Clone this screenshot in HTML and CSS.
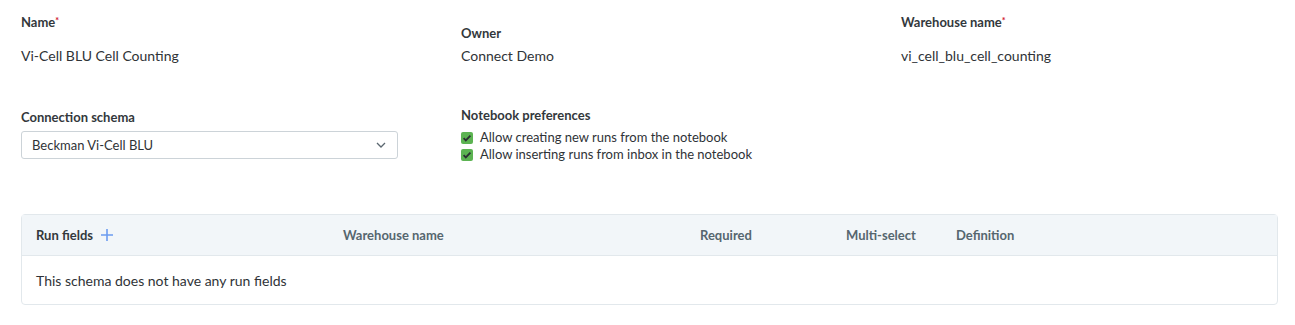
FILE: index.html
```html
<!DOCTYPE html>
<html lang="en">
<head>
    <meta charset="UTF-8">
    <title>Schema details</title>
    <link rel="stylesheet" href="styles.css">
</head>
<body>
    <!--1. 기본 정보-->
    <section class="fields">
        <div class="field">
            <label class="flabel">Name<span class="req">*</span></label>
            <div class="fvalue edit">Vi-Cell BLU Cell Counting</div>
        </div>
        <div class="field">
            <label class="flabel">Owner</label>
            <div class="fvalue">Connect Demo</div>
        </div>
        <div class="field">
            <label class="flabel">Warehouse name<span class="req">*</span></label>
            <div class="fvalue edit">vi_cell_blu_cell_counting</div>
        </div>
    </section>

    <!--2. 스키마 / 노트북 설정-->
    <section class="fields row2">
        <div class="field schema">
            <label class="flabel">Connection schema</label>
            <div class="select">
                <span>Beckman Vi-Cell BLU</span>
                <svg class="chev" width="10" height="6" viewBox="0 0 10 6"><path d="M1 1l4 4 4-4" fill="none" stroke="#5b6770" stroke-width="1.3"/></svg>
            </div>
        </div>
        <div class="field">
            <label class="flabel">Notebook preferences</label>
            <ul class="checks">
                <li><span class="cbox"><svg width="12" height="12" viewBox="0 0 12 12"><path d="M2.6 6.2l2.2 2.2 4.6-4.8" fill="none" stroke="#2b2f33" stroke-width="1.8"/></svg></span>Allow creating new runs from the notebook</li>
                <li><span class="cbox"><svg width="12" height="12" viewBox="0 0 12 12"><path d="M2.6 6.2l2.2 2.2 4.6-4.8" fill="none" stroke="#2b2f33" stroke-width="1.8"/></svg></span>Allow inserting runs from inbox in the notebook</li>
            </ul>
        </div>
        <div class="field"></div>
    </section>

    <!--3. Run fields 테이블-->
    <section class="runtbl">
        <div class="thead">
            <div class="c1">Run fields
                <svg class="plus" width="12" height="12" viewBox="0 0 12 12"><path d="M6 0v12M0 6h12" stroke="#6c9cf0" stroke-width="1.6"/></svg>
            </div>
            <div class="c2">Warehouse name</div>
            <div class="c3">Required</div>
            <div class="c4">Multi-select</div>
            <div class="c5">Definition</div>
        </div>
        <div class="tbody">This schema does not have any run fields</div>
    </section>
</body>
</html>
```

FILE: styles.css
```css
html,
body,
ul {
    margin: 0;
    padding: 0;
}

body {
    background-color: #fff;
    font-family: Lato, "Liberation Sans", sans-serif;
    color: #2f3337;
    padding: 0 17px 0 21px;
}

/*1. 필드 그리드*/
.fields {
    display: grid;
    grid-template-columns: 440px 440px 1fr;
    align-items: end;
    padding-top: 14px;
}

.flabel {
    display: block;
    font-size: 13px;
    font-weight: 700;
    color: #33383c;
    line-height: 16px;
}

.req {
    color: #d0122b;
    font-size: 9px;
    vertical-align: top;
    position: relative;
    top: -1px;
}

.fvalue {
    font-size: 14px;
    line-height: 18px;
    margin-top: 6px;
}

/*편집가능한 값 - 위 여백 더 큼*/
.fvalue.edit {
    margin-top: 17px;
}

/*2. 두번째 줄*/
.row2 {
    padding-top: 42px;
    align-items: start;
}

.schema {
    padding-top: 2px;
}

.select {
    display: flex;
    align-items: center;
    justify-content: space-between;
    width: 377px;
    height: 28px;
    box-sizing: border-box;
    margin-top: 6px;
    padding: 0 11px 0 10px;
    border: 1px solid #ccd3d8;
    border-radius: 3px;
    font-size: 13px;
}

.checks {
    list-style: none;
    margin-top: 6px;
}

.checks li {
    display: flex;
    align-items: center;
    font-size: 13px;
    line-height: 17px;
}

.cbox {
    display: flex;
    width: 12px;
    height: 12px;
    background: #5cb352;
    border-radius: 2px;
    margin-right: 7px;
}

/*3. 테이블*/
.runtbl {
    margin-top: 51px;
    border: 1px solid #e2e8ec;
    border-radius: 4px;
}

.thead {
    display: flex;
    align-items: center;
    height: 40px;
    background: #f2f6f9;
    border-bottom: 1px solid #e2e8ec;
    font-size: 13px;
    font-weight: 700;
    color: #56666f;
    padding-left: 14px;
}

.thead .c1 {
    display: flex;
    align-items: center;
    width: 307px;
    color: #33383c;
}

.plus {
    margin-left: 8px;
}

.thead .c2 { width: 357px; }
.thead .c3 { width: 146px; }
.thead .c4 { width: 110px; }

.tbody {
    height: 48px;
    display: flex;
    align-items: center;
    padding-left: 14px;
    font-size: 14px;
}
```
